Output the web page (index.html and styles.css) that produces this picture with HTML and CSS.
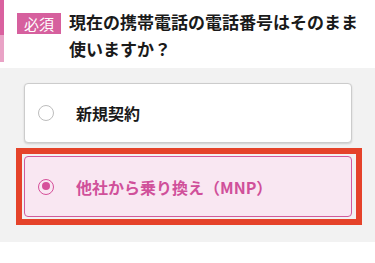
FILE: index.html
```html
<!DOCTYPE html>
<html lang="ja">
<head>
    <meta charset="utf-8">
    <title>番号の引き継ぎ</title>
    <link rel="stylesheet" href="styles.css">
</head>
<body>
    <div class="question">
        <div class="question-bar">
            <span class="bar-top"></span>
            <span class="bar-bottom"></span>
        </div>
        <span class="required">必須</span>
        <h2 class="question-text">現在の携帯電話の電話番号はそのまま使いますか？</h2>
    </div>
    <div class="options">
        <label class="option">
            <span class="radio"></span>
            <span class="option-label">新規契約</span>
        </label>
        <label class="option selected">
            <span class="radio"></span>
            <span class="option-label">他社から乗り換え（MNP）</span>
        </label>
    </div>
    <div class="highlight"></div>
</body>
</html>
```

FILE: styles.css
```css
body {
    margin: 0;
    width: 375px;
    height: 263px;
    position: relative;
    background-color: #ffffff;
    font-family: "Noto Sans CJK JP", "Noto Sans", sans-serif;
    color: #1a1a1a;
}
.question {
    display: flex;
    align-items: flex-start;
    padding: 8px 10px 6px 0;
}
.question-bar {
    display: flex;
    flex-direction: column;
    width: 4px;
    height: 62px;
    margin-top: -8px;
    flex-shrink: 0;
}
.bar-top {
    height: 35px;
    background-color: #d9619f;
}
.bar-bottom {
    flex: 1;
    background-color: #e9a3c6;
}
.required {
    flex-shrink: 0;
    margin: 5px 8px 0 13px;
    padding: 0 7px;
    height: 21px;
    line-height: 21px;
    font-size: 15px;
    color: #ffffff;
    background-color: #d6609e;
}
.question-text {
    margin: 0;
    font-size: 17px;
    font-weight: bold;
    line-height: 27px;
}
.options {
    display: flex;
    flex-direction: column;
    gap: 13px;
    padding: 15px 23px 25px 24px;
    background-color: #f2f2f2;
}
.option {
    display: flex;
    align-items: center;
    height: 60px;
    padding-left: 13px;
    box-sizing: border-box;
    background-color: #ffffff;
    border: 1px solid #cccccc;
    border-radius: 4px;
    box-shadow: 0 1px 2px rgba(0, 0, 0, 0.15);
}
.option.selected {
    height: 61px;
    background-color: #f9e7f2;
    border: 1.5px solid #d15a9c;
    box-shadow: none;
}
.radio {
    width: 16px;
    height: 16px;
    box-sizing: border-box;
    border: 1.5px solid #bdbdbd;
    border-radius: 50%;
    background-color: #ffffff;
    flex-shrink: 0;
    position: relative;
}
.selected .radio {
    border: 1.5px solid #d6509a;
    background-color: #f9e7f2;
}
.selected .radio::after {
    content: "";
    position: absolute;
    top: 2.5px;
    left: 2.5px;
    width: 8px;
    height: 8px;
    border-radius: 50%;
    background-color: #d6509a;
}
.option-label {
    margin-left: 22px;
    font-size: 16px;
    font-weight: bold;
}
.selected .option-label {
    color: #d0509a;
}
.highlight {
    position: absolute;
    left: 16px;
    top: 148px;
    width: 346px;
    height: 77px;
    box-sizing: border-box;
    border: 6px solid #e5432a;
}
```
